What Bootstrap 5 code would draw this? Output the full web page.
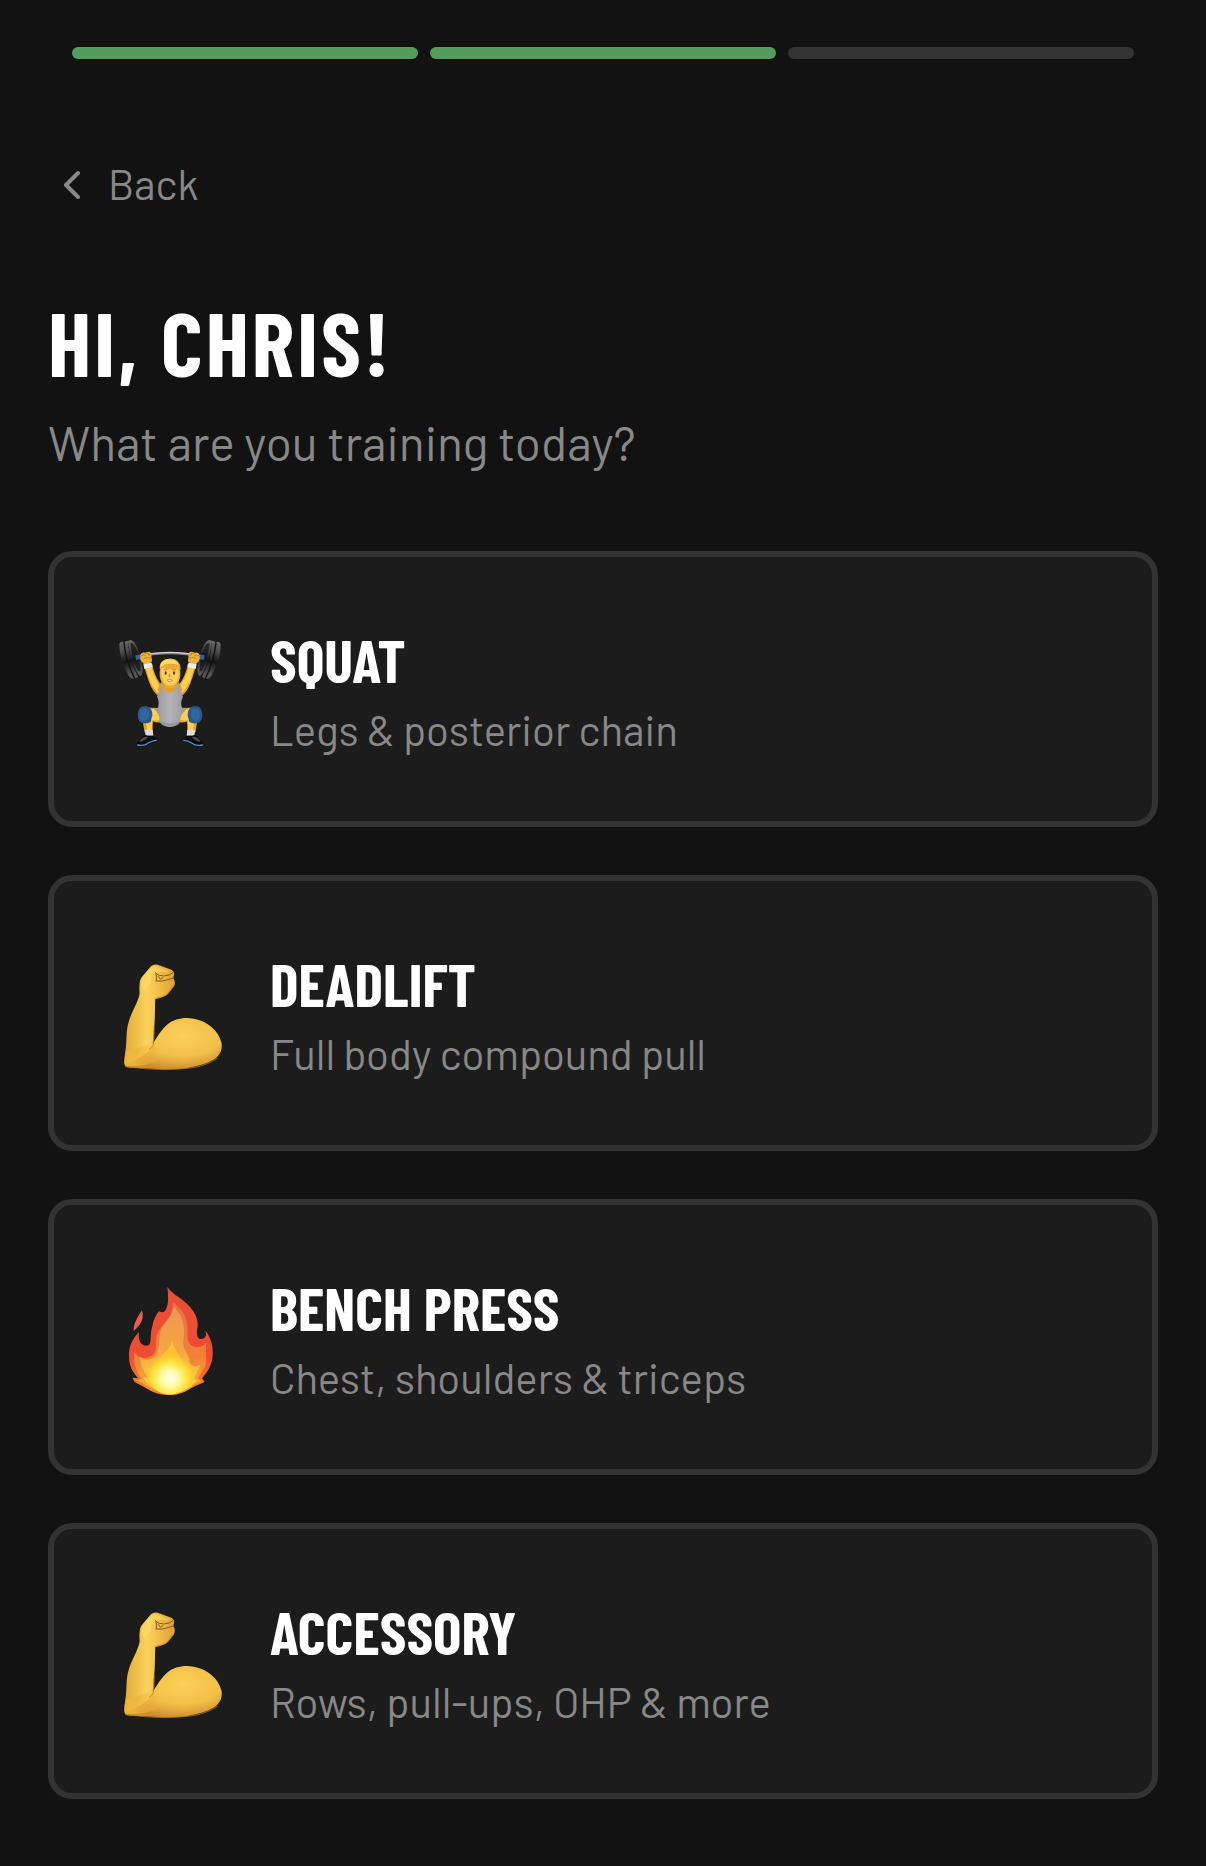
<!DOCTYPE html>
<html lang="en">
<head>
<meta charset="utf-8">
<meta name="viewport" content="width=device-width, initial-scale=1">
<title>Choose your training</title>
<link href="https://cdn.jsdelivr.net/npm/bootstrap@5.3.0/dist/css/bootstrap.min.css" rel="stylesheet">
<style>
  :root {
    --page: #121212;
    --panel: #1c1c1c;
    --edge: #333333;
    --muted: #888888;
    --done: #529d5b;
  }
  body {
    background: var(--page);
    color: #fff;
    font-family: Barlow, Roboto, "Liberation Sans", sans-serif;
    font-weight: 400;
  }
  .steps { padding: 47px 72px 0; gap: 12px; }
  .step { height: 12px; border-radius: 6px; background: var(--edge); }
  .step-done { background: var(--done); }
  .screen { padding: 94px 48px 60px; }
  .back-btn {
    gap: 24px;
    padding: 0 12px;
    font-size: 42px;
    line-height: 60px;
    color: var(--muted);
    border: 0;
  }
  .back-btn:hover { color: #fff; }
  .headline, .choice-title {
    font-family: "Barlow Condensed", "Roboto Condensed", "Liberation Sans Narrow", "Liberation Sans", sans-serif;
    font-weight: 700;
    text-transform: uppercase;
  }
  .headline { font-size: 90px; line-height: 108px; letter-spacing: 3px; margin: 74px 0 11px; }
  .question { font-size: 48px; line-height: 72px; color: var(--muted); margin: 0 0 73px; }
  .choices { gap: 48px; }
  .choice {
    gap: 48px;
    min-height: 276px;
    padding: 8px 60px 0;
    background: var(--panel);
    border: 6px solid var(--edge);
    border-radius: 24px;
    color: #fff;
  }
  .choice:hover { background: #222; border-color: var(--done); color: #fff; }
  .emoji { width: 108px; height: 108px; }
  .choice-title { font-size: 60px; line-height: 72px; }
  .choice-note { font-size: 42px; line-height: 68px; color: var(--muted); }
</style>
</head>
<body>
<!-- Shared drawings -->
<svg width="0" height="0" class="position-absolute" aria-hidden="true">
  <defs>
    <linearGradient id="forearm" x1="0" x2="1"><stop offset="0" stop-color="#e3a936"/><stop offset=".45" stop-color="#fbd25c"/><stop offset="1" stop-color="#e0a133"/></linearGradient>
    <radialGradient id="muscle" cx=".6" cy=".35" r=".65"><stop offset="0" stop-color="#fbd05a"/><stop offset=".6" stop-color="#f3c048"/><stop offset="1" stop-color="#d0902f"/></radialGradient>
    <linearGradient id="elbow" x1="0" x2="1"><stop offset="0" stop-color="#eeb63c"/><stop offset="1" stop-color="#f0bb44" stop-opacity="0"/></linearGradient>
    <linearGradient id="flameOuter" x1="0" y1="0" x2="0" y2="1"><stop offset="0" stop-color="#e65038"/><stop offset=".65" stop-color="#ee4d30"/><stop offset="1" stop-color="#f98e2c"/></linearGradient>
    <linearGradient id="flameMid" x1="0" y1="0" x2="0" y2="1"><stop offset="0" stop-color="#e9704a"/><stop offset=".6" stop-color="#f28038"/><stop offset="1" stop-color="#ffb92e"/></linearGradient>
    <linearGradient id="flameInner" x1="0" y1="0" x2="0" y2="1"><stop offset="0" stop-color="#ee9650"/><stop offset=".5" stop-color="#f5a544"/><stop offset="1" stop-color="#ffdc3c"/></linearGradient>
    <radialGradient id="flameCore" cx=".5" cy=".62" r=".6"><stop offset="0" stop-color="#fffff4"/><stop offset=".35" stop-color="#fffba0"/><stop offset=".7" stop-color="#ffe535" stop-opacity=".8"/><stop offset="1" stop-color="#ffc82e" stop-opacity="0"/></radialGradient>
    <linearGradient id="plate" x1="0" y1="0" x2=".3" y2="1"><stop offset="0" stop-color="#6e6e6e"/><stop offset=".35" stop-color="#444"/><stop offset=".6" stop-color="#141414"/><stop offset="1" stop-color="#555"/></linearGradient>
    <linearGradient id="vest" x1="0" x2="1"><stop offset="0" stop-color="#939398"/><stop offset=".5" stop-color="#b4b4b8"/><stop offset="1" stop-color="#939398"/></linearGradient>
    <symbol id="flex-arm" viewBox="42 54 324 324">
      <path fill="url(#muscle)" d="M73 350C82 330 120 305 155 303C170 278 183 255 203 238C222 222 251 216 281 221C323 228 356 258 364 292C371 326 349 345 310 358C266 373 213 376 174 372C140 369 105 372 80 367Q71 362 73 350Z"/>
      <path fill="url(#forearm)" d="M120 108Q122 99 130 91L153 64Q161 56 173 59L214 74Q224 79 222 90L220 100Q229 112 221 125L201 149Q188 158 166 162C164 190 166 224 162 252C160 278 162 296 157 308C139 326 116 342 76 360C71 350 74 334 76 321C82 285 76 258 88 224C100 192 116 167 119 145Q117 125 120 108Z"/>
      <path fill="url(#elbow)" d="M77 320Q118 300 159 302L210 320Q180 362 82 364Q72 360 74 345Z"/>
      <path fill="none" stroke="#bd7f26" stroke-width="4" opacity=".6" d="M76 364Q170 378 250 371Q320 365 352 338M163 245Q163 275 159 302L148 314M168 160Q192 156 204 145L222 121"/>
      <path fill="#ffdc6c" opacity=".5" d="M128 100L154 70Q163 62 177 68L206 80Q185 82 166 80Q151 92 154 114Q140 122 134 142Q121 124 128 100Z"/>
      <path fill="none" stroke="#8a5915" stroke-width="3" stroke-linecap="round" stroke-linejoin="round" d="M166 84Q172 92 190 93Q208 92 218 84M168 87Q172 97 168 108Q184 110 200 105L220 99M176 95L181 103L189 98"/>
    </symbol>
    <symbol id="flame" viewBox="42 51 324 324">
      <path fill="#ed5d50" d="M126 121Q133 146 119 164L101 184C100 163 109 147 126 121Z"/>
      <path fill="url(#flameOuter)" d="M202 51C220 76 251 87 270 111C290 134 297 155 291 181C289 203 299 211 311 205C321 199 318 189 316 182C331 199 340 226 338 253C338 282 323 306 306 325L314 336Q285 348 268 358Q240 376 210 375Q174 376 148 360Q127 348 104 336L97 323L115 325C97 307 87 286 87 258C86 228 97 207 117 185C114 206 119 225 137 227C160 229 147 198 157 169Q161 143 177 123Q186 131 195 123C207 104 205 77 202 51Z"/>
      <path fill="url(#flameMid)" d="M219 97C235 109 258 130 261 159C267 185 253 216 279 229Q299 238 320 218C312 239 328 271 310 300L293 325L304 333Q277 346 258 361Q211 382 162 359L110 330L126 327C107 304 100 276 103 246Q120 273 150 260C177 249 163 221 171 195C182 162 210 153 215 126Q219 110 219 97Z"/>
      <path fill="url(#flameInner)" d="M222 111Q216 133 196 158C173 186 181 209 174 239C168 267 139 279 119 259Q121 293 143 322L128 323Q159 363 208 370Q254 373 292 330L282 325L302 284Q274 300 268 270C265 250 247 239 250 210C256 173 251 141 222 111Z"/>
      <path fill="#ffc831" opacity=".8" d="M216 207Q215 229 195 246C177 262 174 282 173 305Q151 301 138 281Q148 316 159 324L138 326Q164 370 207 372Q253 370 283 329L262 325Q277 306 281 292Q257 305 250 283C242 253 222 245 216 207Z"/>
      <ellipse cx="210" cy="310" rx="66" ry="64" fill="url(#flameCore)"/>
    </symbol>
    <symbol id="lifter" viewBox="42 57 324 324">
      <path fill="none" stroke="#85878c" stroke-width="7" d="M111 111Q210 87 308 111"/>
      <path fill="none" stroke="#dedee0" stroke-width="3" d="M111 109Q210 85 308 109"/>
      <g id="weight">
        <path fill="url(#plate)" d="M58 72Q60 63 72 66Q84 82 98 126Q108 165 101 176Q92 178 84 165Q56 108 58 72Z"/>
        <path fill="#101010" d="M70 68Q77 60 83 66Q101 100 110 164Q108 176 101 174Q76 125 70 68Z"/>
        <path fill="url(#plate)" d="M74 65Q82 60 89 63Q107 98 117 166Q113 175 106 175Q80 126 74 65Z"/>
        <path fill="#101010" d="M84 66Q100 90 120 168L115 171Q88 125 84 66Z"/>
        <path fill="url(#plate)" d="M84 64Q94 54 104 68Q124 99 128 148Q128 168 119 169Q92 136 84 64Z"/>
        <path fill="#171717" opacity=".75" d="M91 70Q99 67 106 82Q120 109 122 150Q119 160 112 148Q95 115 91 70Z"/>
        <path fill="#2b64ae" d="M106 106L121 103L124 118L108 119Z"/>
      </g>
      <use href="#weight" transform="translate(420 0) scale(-1 1)"/>
      <g id="lifter-limbs">
        <path fill="#dda02d" d="M131 136L157 131Q161 161 177 185L189 205L176 229Q158 215 148 188Q139 164 131 136Z"/>
        <path fill="#fbcd50" d="M136 140L154 136Q158 163 174 188L184 205L173 219Q155 199 147 175Z"/>
        <path fill="#eee" d="M130 130L155 128L157 141L133 147Z"/>
        <path fill="#efb338" d="M121 105Q124 95 134 98L146 95Q155 96 154 106L156 124Q151 132 134 131Q122 128 121 115Z"/>
        <path fill="none" stroke="#af7221" stroke-width="2" d="M122 108Q130 101 137 108M134 100Q142 96 148 106M145 98L150 108M130 116Q140 110 153 114"/>
        <path fill="#e1a22e" d="M143 263L184 264L192 305Q174 311 158 304L158 337H134L128 304Z"/>
        <path fill="#fbcd50" d="M153 267L179 266L183 298Q169 305 158 301L155 332H142L136 304Z"/>
        <path fill="#29578f" d="M115 272Q120 256 140 259Q158 265 157 286L152 306Q136 315 119 305Q110 290 115 272Z"/>
        <path fill="#3a6eaa" opacity=".6" d="M122 271Q134 260 146 270Q151 288 139 302Q125 305 120 294Z"/>
        <path fill="#dcdcdc" d="M134 329H158L160 347H137Z"/>
        <path fill="#0c0c0c" d="M134 344Q146 349 160 347L170 356Q171 366 157 368L133 379Q116 381 110 373Q115 358 134 344Z"/>
        <path fill="#4b4b4b" d="M119 362Q130 348 144 351Q137 362 119 366Z"/>
        <path fill="none" stroke="#5590d0" stroke-width="4" stroke-linecap="round" d="M113 375Q133 379 145 369Q158 361 169 361"/>
      </g>
      <use href="#lifter-limbs" transform="translate(420 0) scale(-1 1)"/>
      <path fill="#e0a12d" d="M183 186Q210 218 237 186L248 211Q211 238 172 211Z"/>
      <path fill="url(#vest)" d="M183 191C188 213 193 218 211 218Q228 217 235 190L241 200Q239 216 249 230Q240 248 246 263L262 266Q240 280 240 307Q232 319 209 321Q187 319 179 307Q179 277 160 266L174 264Q179 247 171 229Q181 219 179 196Z"/>
      <path fill="#77777c" opacity=".4" d="M180 304Q209 316 239 304L237 314Q210 326 184 315Z"/>
      <ellipse cx="210" cy="161" rx="31" ry="43" fill="#e9ae38"/>
      <path fill="#fccf52" d="M184 142Q207 153 236 146Q239 180 224 192Q210 200 195 191Q183 176 184 142Z"/>
      <path fill="#e8ac38" d="M180 150Q174 121 205 116Q240 112 242 148L236 154Q233 142 222 139Q201 146 190 137Q186 144 180 150Z"/>
      <path fill="#ffda6b" d="M181 142Q181 119 207 117Q230 117 236 135Q220 128 194 133Q188 139 181 142Z"/>
      <path fill="none" stroke="#a06f22" stroke-width="2" stroke-linecap="round" d="M192 150L201 149M218 149L227 150M209 162L207 169L213 169"/>
      <ellipse cx="197" cy="159" rx="3" ry="5" fill="#4b2b12"/><ellipse cx="222" cy="159" rx="3" ry="5" fill="#4b2b12"/>
      <path fill="#f6e3c4" stroke="#b8762c" stroke-width="2" d="M201 180Q209 175 217 180Q215 185 209 185Q203 185 201 180Z"/>
    </symbol>
  </defs>
</svg>

<div class="steps d-flex" role="group" aria-label="Step 2 of 3">
  <div class="step step-done flex-fill"></div>
  <div class="step step-done flex-fill"></div>
  <div class="step flex-fill"></div>
</div>

<main class="screen">
  <button type="button" class="back-btn btn d-flex align-items-center">
    <svg width="24" height="32" viewBox="0 0 24 32" fill="none" stroke="currentColor" stroke-width="4" stroke-linecap="round" stroke-linejoin="round" aria-hidden="true"><path d="M18 6L6 18L18 30"/></svg>
    <span>Back</span>
  </button>

  <h1 class="headline">Hi, Chris!</h1>
  <p class="question">What are you training today?</p>

  <div class="choices d-flex flex-column">
    <button type="button" class="choice btn d-flex align-items-center text-start">
      <svg class="emoji flex-shrink-0" aria-hidden="true"><use href="#lifter"/></svg>
      <span class="d-flex flex-column">
        <span class="choice-title">Squat</span>
        <span class="choice-note">Legs &amp; posterior chain</span>
      </span>
    </button>
    <button type="button" class="choice btn d-flex align-items-center text-start">
      <svg class="emoji flex-shrink-0" aria-hidden="true"><use href="#flex-arm"/></svg>
      <span class="d-flex flex-column">
        <span class="choice-title">Deadlift</span>
        <span class="choice-note">Full body compound pull</span>
      </span>
    </button>
    <button type="button" class="choice btn d-flex align-items-center text-start">
      <svg class="emoji flex-shrink-0" aria-hidden="true"><use href="#flame"/></svg>
      <span class="d-flex flex-column">
        <span class="choice-title">Bench Press</span>
        <span class="choice-note">Chest, shoulders &amp; triceps</span>
      </span>
    </button>
    <button type="button" class="choice btn d-flex align-items-center text-start">
      <svg class="emoji flex-shrink-0" aria-hidden="true"><use href="#flex-arm"/></svg>
      <span class="d-flex flex-column">
        <span class="choice-title">Accessory</span>
        <span class="choice-note">Rows, pull-ups, OHP &amp; more</span>
      </span>
    </button>
  </div>
</main>
<script src="https://cdn.jsdelivr.net/npm/bootstrap@5.3.0/dist/js/bootstrap.bundle.min.js"></script>
</body>
</html>
